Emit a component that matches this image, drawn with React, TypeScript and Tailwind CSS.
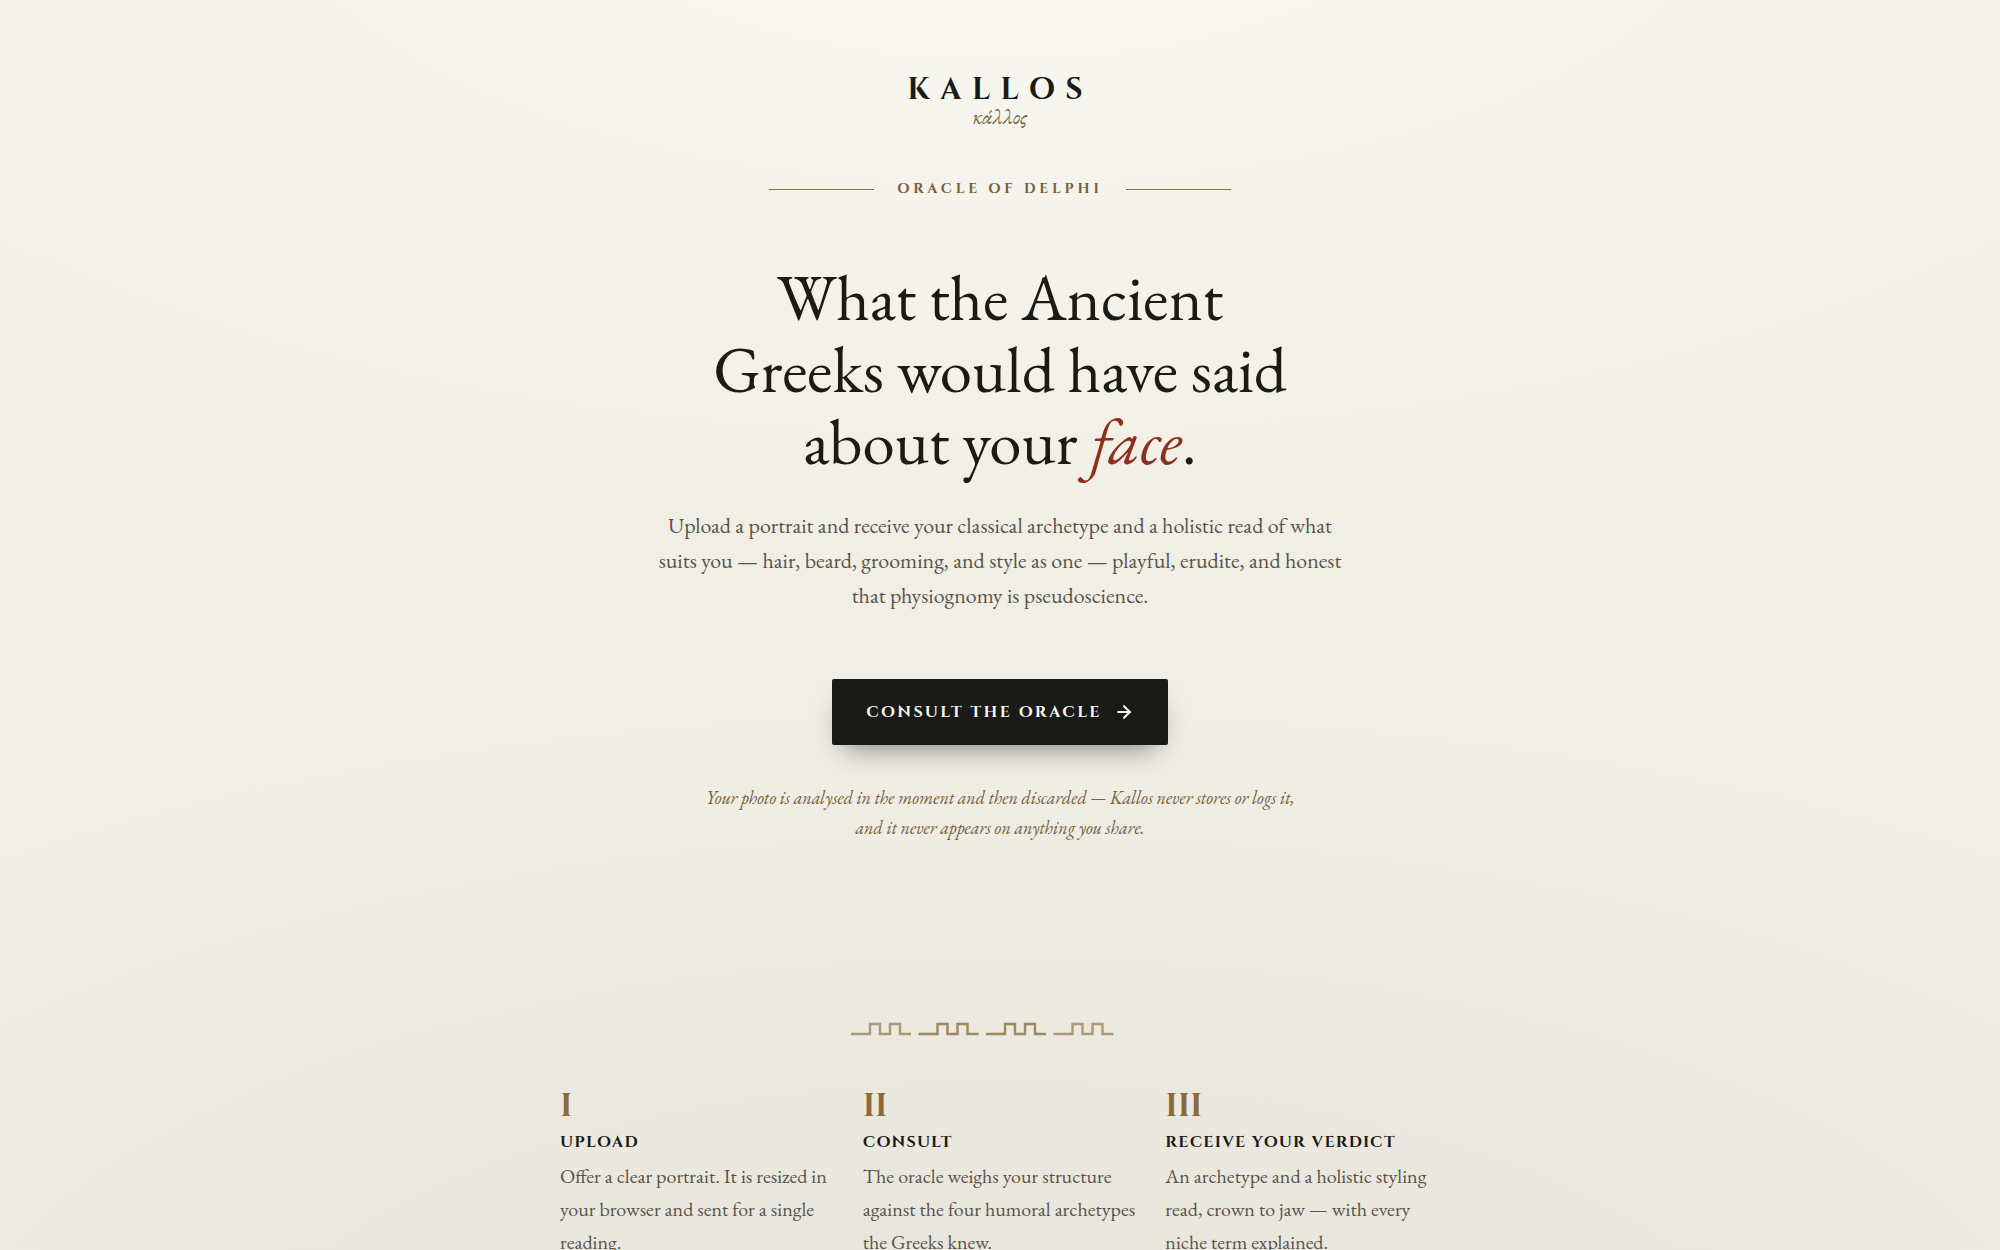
import React from 'react';
import { ArrowRight } from 'lucide-react';

const steps = [
  {
    numeral: 'I',
    title: 'Upload',
    text: 'Offer a clear portrait. It is resized in your browser and sent for a single reading.',
  },
  {
    numeral: 'II',
    title: 'Consult',
    text: 'The oracle weighs your structure against the four humoral archetypes the Greeks knew.',
  },
  {
    numeral: 'III',
    title: 'Receive your verdict',
    text: 'An archetype and a holistic styling read, crown to jaw — with every niche term explained.',
  },
];

const Header: React.FC = () => (
  <header className="flex w-full flex-col items-center">
    <div className="font-['Cinzel','Liberation_Serif',serif] text-[30px] leading-[33px] font-bold tracking-[0.34em]">
      KALLOS
    </div>
    <div lang="el" className="text-[21px] leading-[20px] text-[#75603a] italic">
      κάλλος
    </div>
    <div className="mt-[50px] flex w-full max-w-[462px] items-center gap-[23px]">
      <span className="h-px flex-1 bg-[#8b7443]" />
      <span className="font-['Cinzel','Liberation_Serif',serif] text-[14px] leading-[24px] font-semibold tracking-[0.28em] text-[#75603a] uppercase">
        Oracle of Delphi
      </span>
      <span className="h-px flex-1 bg-[#8b7443]" />
    </div>
  </header>
);

// Greek key divider, fading towards both ends
const Meander: React.FC = () => (
  <svg
    viewBox="0 0 298 16"
    className="h-4 w-[298px]"
    fill="none"
    stroke="#8b6f3c"
    strokeWidth="2.4"
    aria-hidden="true"
  >
    <path opacity="0.65" d="M0 13H19V3H29V13H39V3H49V13H60" />
    <path opacity="0.8" d="M67.5 13H86.5V3H96.5V13H106.5V3H116.5V13H127.5" />
    <path opacity="0.8" d="M135 13H154V3H164V13H174V3H184V13H195" />
    <path opacity="0.65" d="M202.5 13H221.5V3H231.5V13H241.5V3H251.5V13H262.5" />
  </svg>
);

const Steps: React.FC = () => (
  <ol className="grid w-full max-w-[880px] grid-cols-3 gap-7">
    {steps.map((step) => (
      <li key={step.numeral}>
        <div className="font-['Cinzel','Liberation_Serif',serif] text-[32px] leading-[40px] font-bold text-[#8b6a38]">
          {step.numeral}
        </div>
        <h2 className="mt-[3px] font-['Cinzel','Liberation_Serif',serif] text-[16px] leading-[24px] font-semibold tracking-[0.08em] uppercase">
          {step.title}
        </h2>
        <p className="mt-[6px] text-[20px] leading-[33px] text-[#57544a]">{step.text}</p>
      </li>
    ))}
  </ol>
);

export default function App() {
  return (
    <div className="min-h-screen bg-[#f1eee5] bg-[radial-gradient(120%_80%_at_50%_-10%,#f9f8f3_0%,transparent_65%),radial-gradient(120%_80%_at_50%_110%,#e6e3da_0%,transparent_70%)] font-['EB_Garamond','Liberation_Serif',serif] text-[#1a1a16]">
      <main className="flex flex-col items-center px-6 pt-[74px] pb-6">
        <Header />

        <h1 className="mt-[60px] max-w-[620px] text-center text-[65px] leading-[72px]">
          What the Ancient Greeks would have said about your{' '}
          <em className="text-[#8c2f1d]">face</em>.
        </h1>
        <p className="mt-[31px] max-w-[690px] text-center text-[22px] leading-[35px] text-[#57544a]">
          Upload a portrait and receive your classical archetype and a holistic read of what suits
          you — hair, beard, grooming, and style as one — playful, erudite, and honest that
          physiognomy is pseudoscience.
        </p>

        <button
          type="button"
          className="mt-[66px] flex h-[66px] items-center gap-3 rounded-xs bg-[#1a1a16] px-[34px] font-['Cinzel','Liberation_Serif',serif] text-[16px] font-semibold tracking-[0.15em] text-[#f7f5ee] uppercase shadow-[0_14px_28px_-12px_rgba(26,26,22,0.55)]"
        >
          Consult the oracle
          <ArrowRight size={20} strokeWidth={2.5} />
        </button>

        <p className="mt-[38px] max-w-[600px] text-center text-[18px] leading-[30px] text-[#75603a] italic">
          Your photo is analysed in the moment and then discarded — Kallos never stores or logs it,
          and it never appears on anything you share.
        </p>

        <div className="mt-[178px] mb-[50px]">
          <Meander />
        </div>

        <Steps />
      </main>
    </div>
  );
}
